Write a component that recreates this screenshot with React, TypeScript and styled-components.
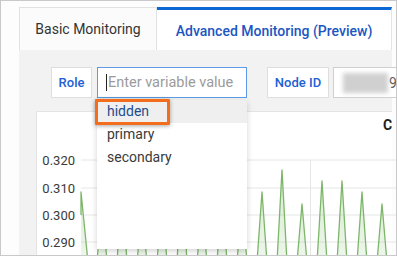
import React from 'react';
import styled, { createGlobalStyle } from 'styled-components';

const GlobalStyle = createGlobalStyle`
  html, body {
    margin: 0;
    padding: 0;
    background: #ffffff;
  }
  body {
    font-family: Roboto, "Liberation Sans", Arial, sans-serif;
  }
`;

// Frame and tab strip
const Frame = styled.div`
  box-sizing: border-box;
  width: 397px;
  height: 256px;
  border: 1px solid #c9c9c9;
  background: #fdfdfd;
  overflow: hidden;
  padding: 6px 4px 0 18px;
  display: flex;
  flex-direction: column;
`;

const TabBar = styled.div`
  display: flex;
  height: 43px;
  flex-shrink: 0;
`;

const Tab = styled.div<{ $active?: boolean }>`
  box-sizing: border-box;
  display: flex;
  align-items: center;
  justify-content: center;
  font-size: 14px;
  white-space: nowrap;
  ${p => p.$active ? `
    flex: 1;
    background: #ffffff;
    border-top: 3px solid #0b67d4;
    border-right: 1px solid #e4e4e4;
    color: #1b56c3;
    font-weight: 500;
    padding-top: 1px;
  ` : `
    width: 138px;
    background: #fbfbfb;
    border: 1px solid #e2e2e2;
    border-bottom: none;
    color: #333333;
  `}
`;

const Panel = styled.div`
  flex: 1;
  background: #f2f2f2;
  padding: 17px 0 0 17px;
  min-height: 0;
`;

// Filter row
const FilterRow = styled.div`
  display: flex;
  align-items: center;
  height: 31px;
  padding-left: 15px;
`;

const LabelBox = styled.div<{ $width: number; $gap?: number }>`
  box-sizing: border-box;
  width: ${p => p.$width}px;
  height: 31px;
  margin-left: ${p => p.$gap || 0}px;
  background: #ffffff;
  border: 1px solid #dedede;
  color: #2260d3;
  font-size: 13px;
  font-weight: 500;
  display: flex;
  align-items: center;
  justify-content: center;
  flex-shrink: 0;
`;

const FieldWrap = styled.div`
  position: relative;
  width: 150px;
  height: 31px;
  margin-left: 5px;
  flex-shrink: 0;
`;

const Field = styled.div`
  box-sizing: border-box;
  height: 31px;
  background: #ffffff;
  border: 1px solid #5d9be6;
  display: flex;
  align-items: center;
  padding-left: 8px;
  font-size: 14.5px;
  color: #9b9b9b;
  white-space: nowrap;
  overflow: hidden;
`;

const Caret = styled.span`
  display: inline-block;
  width: 1px;
  height: 17px;
  background: #222;
  margin-right: 1px;
`;

const ValueBox = styled.div`
  box-sizing: border-box;
  flex: 1;
  height: 31px;
  margin-left: 4px;
  min-width: 80px;
  background: #ffffff;
  border: 1px solid #cfcfcf;
  display: flex;
  align-items: center;
  padding-left: 9px;
  overflow: hidden;
  font-size: 14px;
  color: #5a5a5a;
`;

const Blurred = styled.div`
  width: 45px;
  height: 20px;
  background: #d0d0d0;
  filter: blur(2px);
  flex-shrink: 0;
  margin-right: 1px;
`;

// Dropdown overlay
const Menu = styled.div`
  position: absolute;
  top: calc(100% + 2px);
  left: 0;
  width: 150px;
  height: 149px;
  background: #ffffff;
  box-shadow: 0 2px 6px rgba(0, 0, 0, 0.18);
  z-index: 5;
`;

const MenuItem = styled.div<{ $hover?: boolean }>`
  position: relative;
  height: 23px;
  line-height: 23px;
  padding-left: 10px;
  font-size: 14px;
  color: ${p => p.$hover ? '#1c4d8c' : '#3a3a3a'};
  background: ${p => p.$hover ? '#efefef' : 'transparent'};
`;

const Highlight = styled.div`
  position: absolute;
  left: -2px;
  top: -1px;
  width: 75px;
  height: 26px;
  box-sizing: border-box;
  border: 3px solid #f36d1c;
  border-radius: 1px;
  box-shadow: 0 1px 4px rgba(0, 0, 0, 0.35);
`;

// Chart card
const Card = styled.div`
  margin-top: 13px;
  background: #ffffff;
  border: 1px solid #e4e4e4;
  border-right: none;
  height: 200px;
`;

const CardTitle = styled.div`
  height: 28px;
  line-height: 26px;
  padding-left: 346px;
  font-size: 14px;
  font-weight: 700;
  color: #1e1e1e;
  white-space: nowrap;
  overflow: hidden;
`;

const ChartSvg = styled.svg`
  display: block;
`;

const gridY = [20, 48, 75, 102];
const labels = ['0.320', '0.310', '0.300', '0.290'];

// spike centre (page x) and peak (page y)
const spikes: [number, number][] = [
  [102, 200], [122, 185], [142, 210], [162, 195], [182, 175], [202, 205],
  [222, 190], [242, 200], [262, 192], [282, 170], [302, 204], [322, 181],
  [342, 181], [362, 192], [382, 204], [402, 186],
];

const OX = 37;
const OY = 140;
const BASE = 122;

function buildPath() {
  let d = `M44 75 L44 52 L51 ${BASE}`;
  spikes.forEach(([c, p]) => {
    const x = c - OX;
    d += ` L${x - 5} ${BASE} L${x} ${p - OY} L${x + 5} ${BASE}`;
  });
  return d;
}

const Chart: React.FC = () => {
  const line = buildPath();
  return (
    <ChartSvg width={380} height={118}>
      <defs>
        <linearGradient id="g" x1="0" y1="0" x2="0" y2="1">
          <stop offset="0" stopColor="#8cc47a" stopOpacity="0.35" />
          <stop offset="1" stopColor="#8cc47a" stopOpacity="0.15" />
        </linearGradient>
      </defs>
      {gridY.map((y, i) => (
        <g key={y}>
          <line x1={44} x2={380} y1={y} y2={y} stroke="#e6e6e6" strokeWidth={1} />
          <text x={38} y={y + 5} textAnchor="end" fontSize={13} fill="#3a3a3a"
            fontFamily="Roboto, 'Liberation Sans', sans-serif">{labels[i]}</text>
        </g>
      ))}
      <line x1={273.5} x2={273.5} y1={20} y2={118} stroke="#e6e6e6" strokeWidth={1} />
      <path d={`${line} L400 ${BASE} L44 ${BASE} Z`} fill="url(#g)" stroke="none" />
      <path d={line} fill="none" stroke="#7db66a" strokeWidth={1.3} strokeLinejoin="round" />
    </ChartSvg>
  );
};

const App: React.FC = () => {
  return (
    <>
      <GlobalStyle />
      <Frame>
        <TabBar>
          <Tab>Basic Monitoring</Tab>
          <Tab $active>Advanced Monitoring (Preview)</Tab>
        </TabBar>
        <Panel>
          <FilterRow>
            <LabelBox $width={41}>Role</LabelBox>
            <FieldWrap>
              <Field>
                <Caret />
                Enter variable value
              </Field>
              <Menu>
                <MenuItem $hover>
                  hidden
                  <Highlight />
                </MenuItem>
                <MenuItem>primary</MenuItem>
                <MenuItem>secondary</MenuItem>
              </Menu>
            </FieldWrap>
            <LabelBox $width={62} $gap={20}>Node ID</LabelBox>
            <ValueBox>
              <Blurred />
              9
            </ValueBox>
          </FilterRow>
          <Card>
            <CardTitle>CPU Utilization</CardTitle>
            <Chart />
          </Card>
        </Panel>
      </Frame>
    </>
  );
};

export default App;
